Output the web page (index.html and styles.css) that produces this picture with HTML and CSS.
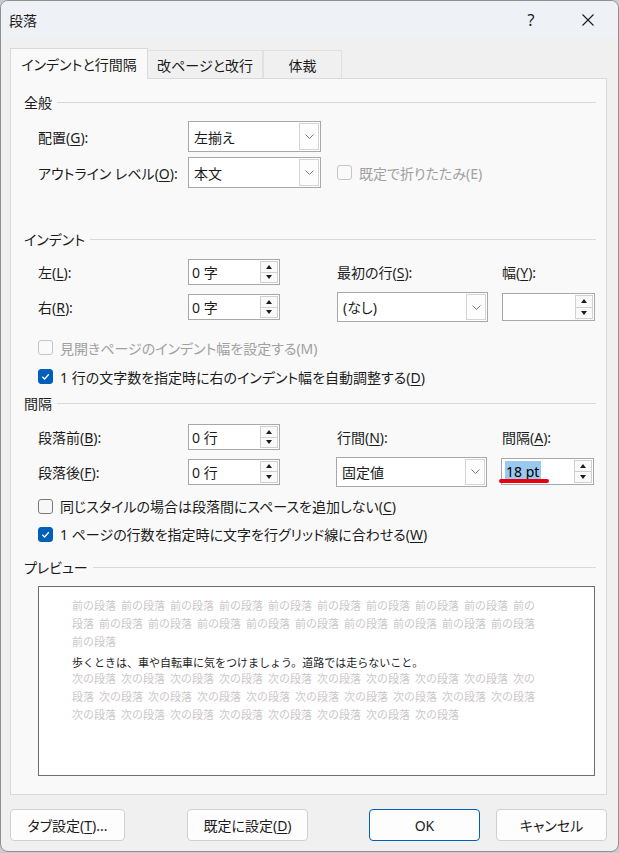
FILE: index.html
```html
<!DOCTYPE html>
<html lang="ja">
<head>
<meta charset="utf-8">
<title>段落</title>
<link rel="stylesheet" href="styles.css">
</head>
<body>
<div class="window">
  <div class="titlebar">
    <span class="title">段落</span>
    <span class="help">?</span>
    <span class="close"><svg width="12" height="12" viewBox="0 0 12 12"><path d="M0.5 0.5 L11.5 11.5 M11.5 0.5 L0.5 11.5" stroke="#1b1b1b" stroke-width="1.1" fill="none"/></svg></span>
  </div>
  <div class="body">
    <div class="tabs">
      <div class="tab active t1">インデントと行間隔</div>
      <div class="tab t2">改ページと改行</div>
      <div class="tab t3">体裁</div>
    </div>
    <div class="panel">
      <div class="gh g-general"><span>全般</span></div>
      <div class="frow r-h31 r-align">
        <span class="lbl">配置(<u>G</u>):</span>
        <div class="combo w133"><span class="val">左揃え</span><span class="dd"><svg width="9" height="5" viewBox="0 0 9 5"><path d="M0.5 0.5 L4.5 4.5 L8.5 0.5" stroke="#7a7a7a" fill="none" stroke-width="1"/></svg></span></div>
      </div>
      <div class="frow r-h31 r-outline">
        <span class="lbl">アウトライン レベル(<u>O</u>):</span>
        <div class="combo w133"><span class="val">本文</span><span class="dd"><svg width="9" height="5" viewBox="0 0 9 5"><path d="M0.5 0.5 L4.5 4.5 L8.5 0.5" stroke="#7a7a7a" fill="none" stroke-width="1"/></svg></span></div>
        <div class="chk in-grid disabled span2"><span class="box"></span><span>既定で折りたたみ(E)</span></div>
      </div>

      <div class="gh g-indent"><span>インデント</span></div>
      <div class="frow r-h30 r-left">
        <span class="lbl">左(<u>L</u>):</span>
        <div class="spin w92"><span class="val">0 字</span><span class="arrows"><span class="arr up"></span><span class="arr down"></span></span></div>
        <span class="lbl">最初の行(<u>S</u>):</span>
        <span class="lbl">幅(<u>Y</u>):</span>
      </div>
      <div class="frow r-h30 r-right">
        <span class="lbl">右(<u>R</u>):</span>
        <div class="spin w92"><span class="val">0 字</span><span class="arrows"><span class="arr up"></span><span class="arr down"></span></span></div>
        <div class="combo w151 h30"><span class="val">(なし)</span><span class="dd"><svg width="9" height="5" viewBox="0 0 9 5"><path d="M0.5 0.5 L4.5 4.5 L8.5 0.5" stroke="#7a7a7a" fill="none" stroke-width="1"/></svg></span></div>
        <div class="spin w93 h28"><span class="val"></span><span class="arrows"><span class="arr up"></span><span class="arr down"></span></span></div>
      </div>
      <div class="chk c-mihiraki disabled"><span class="box"></span><span>見開きページのインデント幅を設定する(M)</span></div>
      <div class="chk c-auto"><span class="box on"><svg width="13" height="13" viewBox="0 0 13 13"><path d="M3.3 6.8 L5.6 9 L9.8 4.2" stroke="#fff" stroke-width="1.3" fill="none"/></svg></span><span>1 行の文字数を指定時に右のインデント幅を自動調整する(<u>D</u>)</span></div>

      <div class="gh g-spacing"><span>間隔</span></div>
      <div class="frow r-h30 r-before">
        <span class="lbl">段落前(<u>B</u>):</span>
        <div class="spin w92"><span class="val">0 行</span><span class="arrows"><span class="arr up"></span><span class="arr down"></span></span></div>
        <span class="lbl">行間(<u>N</u>):</span>
        <span class="lbl">間隔(<u>A</u>):</span>
      </div>
      <div class="frow r-h31 r-after">
        <span class="lbl">段落後(<u>F</u>):</span>
        <div class="spin w92"><span class="val">0 行</span><span class="arrows"><span class="arr up"></span><span class="arr down"></span></span></div>
        <div class="combo w151 h30 shift-l"><span class="val">固定値</span><span class="dd"><svg width="9" height="5" viewBox="0 0 9 5"><path d="M0.5 0.5 L4.5 4.5 L8.5 0.5" stroke="#7a7a7a" fill="none" stroke-width="1"/></svg></span></div>
        <div class="spin w93 h27 shift-l"><span class="val"><span class="sel">18 pt</span></span><span class="arrows"><span class="arr up"></span><span class="arr down"></span></span><span class="redline"></span></div>
      </div>
      <div class="chk c-same"><span class="box"></span><span>同じスタイルの場合は段落間にスペースを追加しない(<u>C</u>)</span></div>
      <div class="chk c-grid"><span class="box on"><svg width="13" height="13" viewBox="0 0 13 13"><path d="M3.3 6.8 L5.6 9 L9.8 4.2" stroke="#fff" stroke-width="1.3" fill="none"/></svg></span><span>1 ページの行数を指定時に文字を行グリッド線に合わせる(<u>W</u>)</span></div>

      <div class="gh g-preview"><span>プレビュー</span></div>
      <div class="preview">
        <div class="pv-line ghost"><span>前の段落</span><span>前の段落</span><span>前の段落</span><span>前の段落</span><span>前の段落</span><span>前の段落</span><span>前の段落</span><span>前の段落</span><span>前の段落</span><span>前の</span></div>
        <div class="pv-line ghost"><span>段落</span><span>前の段落</span><span>前の段落</span><span>前の段落</span><span>前の段落</span><span>前の段落</span><span>前の段落</span><span>前の段落</span><span>前の段落</span><span>前の段落</span></div>
        <div class="pv-line ghost"><span>前の段落</span></div>
        <div class="pv-line main">歩くときは、車や自転車に気をつけましょう。道路では走らないこと。</div>
        <div class="pv-line ghost next"><span>次の段落</span><span>次の段落</span><span>次の段落</span><span>次の段落</span><span>次の段落</span><span>次の段落</span><span>次の段落</span><span>次の段落</span><span>次の段落</span><span>次の</span></div>
        <div class="pv-line ghost"><span>段落</span><span>次の段落</span><span>次の段落</span><span>次の段落</span><span>次の段落</span><span>次の段落</span><span>次の段落</span><span>次の段落</span><span>次の段落</span><span>次の段落</span></div>
        <div class="pv-line ghost"><span>次の段落</span><span>次の段落</span><span>次の段落</span><span>次の段落</span><span>次の段落</span><span>次の段落</span><span>次の段落</span><span>次の段落</span></div>
      </div>
    </div>
    <div class="buttons">
      <div class="btn b-tab">タブ設定(<u>T</u>)...</div>
      <div class="btn b-default">既定に設定(<u>D</u>)</div>
      <div class="btn b-ok">OK</div>
      <div class="btn b-cancel">キャンセル</div>
    </div>
  </div>
</div>
</body>
</html>
```
FILE: styles.css
```css
* { box-sizing: border-box; }
html, body { margin: 0; padding: 0; }
body {
  width: 619px;
  height: 853px;
  background: #c8ccd1;
  font-family: "Noto Sans", "Noto Sans CJK JP", sans-serif;
  font-size: 14px;
  color: #1b1b1b;
  font-feature-settings: "palt" 1;
  overflow: hidden;
}
u { text-decoration: underline; text-underline-offset: 2px; text-decoration-thickness: 1px; }

.window {
  width: 619px;
  height: 852px;
  border: 1px solid #8f8f8f;
  border-radius: 8px;
  background: #f0f0f0;
  overflow: hidden;
  display: flex;
  flex-direction: column;
}

/* title bar */
.titlebar {
  flex: none;
  height: 37px;
  background: #eef1f5;
  display: flex;
  align-items: center;
  padding-left: 8px;
}
.title { flex: 1; font-size: 14px; }
.help { width: 30px; text-align: center; margin-right: 27px; font-size: 16px; font-family: "Noto Sans", sans-serif; }
.close { width: 30px; margin-right: 15px; display: flex; justify-content: center; }

/* body */
.body {
  flex: 1;
  padding: 10px 11px 0 9px;
  display: flex;
  flex-direction: column;
}

.tabs {
  display: flex;
  align-items: flex-end;
  height: 30px;
}
.tab {
  height: 28px;
  border: 1px solid #e0e0e0;
  border-bottom: none;
  background: #f0f0f0;
  display: flex;
  align-items: center;
  justify-content: center;
}
.tab.active {
  height: 31px;
  margin-bottom: -1px;
  background: #f9f9f9;
  border-color: #d9d9d9;
  position: relative;
  z-index: 2;
}
.t1 { width: 138px; }
.t2 { width: 115px; border-left: none; }
.t3 { width: 79px; border-left: 1px solid #e0e0e0; }

.panel {
  border: 1px solid #d9d9d9;
  background: #f9f9f9;
  padding: 0 10px 18px 13px;
}

/* group headers */
.gh {
  display: flex;
  align-items: center;
  height: 20px;
  gap: 5px;
}
.gh::after {
  content: "";
  flex: 1;
  height: 1px;
  background: #d9d9d9;
}
.g-general { margin-top: 13px; }
.g-indent { margin-top: 41px; }
.g-spacing { margin-top: 2px; }
.g-preview { margin-top: 9px; }

/* form rows */
.frow {
  display: grid;
  grid-template-columns: 150px 149px 165px 1fr;
  align-items: center;
  padding-left: 14px;
}
.r-h30 { height: 30px; }
.r-h31 { height: 31px; }
.r-align { margin-top: 9px; }
.r-outline { margin-top: 5px; }
.r-left { margin-top: 8px; }
.r-right { margin-top: 5px; }
.r-before { margin-top: 9px; }
.r-after { margin-top: 4px; }
.span2 { grid-column: span 2; }

/* combo box */
.combo {
  display: flex;
  height: 31px;
  border: 1px solid #a8a8a8;
  background: #fff;
  padding: 1px;
}
.combo.h30 { height: 30px; }
.combo .val { flex: 1; padding-left: 4px; display: flex; align-items: center; }
.combo .dd {
  width: 20px;
  border: 1px solid #d4d4d4;
  background: #fdfdfd;
  display: flex;
  align-items: center;
  justify-content: center;
}
.w133 { width: 133px; }
.w151 { width: 151px; }
.shift-l { margin-left: -1px; }

/* spin box */
.spin {
  position: relative;
  display: flex;
  height: 26px;
  border: 1px solid #a8a8a8;
  background: #fff;
  padding: 1px 1px 1px 3px;
}
.spin.h28 { height: 28px; }
.spin.h27 { height: 27px; }
.w92 { width: 92px; }
.w93 { width: 93px; }
.spin .val { flex: 1; display: flex; align-items: center; }
.spin .arrows { width: 18px; display: flex; flex-direction: column; }
.arr {
  flex: 1;
  border: 1px solid #d0d0d0;
  background: #f9f9f9;
  display: flex;
  align-items: center;
  justify-content: center;
}
.arr.down { border-top: none; }
.arr.up::before {
  content: "";
  border-left: 3.5px solid transparent;
  border-right: 3.5px solid transparent;
  border-bottom: 4px solid #1b1b1b;
}
.arr.down::before {
  content: "";
  border-left: 3.5px solid transparent;
  border-right: 3.5px solid transparent;
  border-top: 4px solid #1b1b1b;
}
.sel {
  display: inline-block;
  background: #99c9ef;
  height: 21px;
  line-height: 21px;
  padding: 0 2px 0 1px;
  color: #000;
}
.redline {
  position: absolute;
  left: -3px;
  top: 20px;
  width: 50px;
  height: 4px;
  border-radius: 2px;
  background: #e60012;
}

/* checkboxes */
.chk {
  display: flex;
  align-items: center;
  gap: 7px;
  padding-left: 14px;
}
.chk.in-grid { padding-left: 0; }
.chk .box {
  width: 15px;
  height: 15px;
  border: 1px solid #7a7a7a;
  border-radius: 3px;
  background: #f7f7f7;
  display: flex;
  align-items: center;
  justify-content: center;
  flex: none;
}
.chk .box.on { background: #005fb8; border-color: #005fb8; }
.chk.disabled { color: #a0a0a0; }
.chk.disabled .box { border-color: #c6c6c6; background: #fafafa; }
.c-mihiraki { height: 29px; margin-top: 11px; }
.c-auto { height: 29px; }
.c-same { height: 28px; margin-top: 5px; }
.c-grid { height: 28px; }

/* preview */
.preview {
  margin: 9px 0 0 14px;
  width: 557px;
  height: 190px;
  border: 1px solid #6e6e6e;
  background: #fff;
  padding: 9px 0 0 33px;
  font-family: "Noto Sans CJK JP", sans-serif;
  font-feature-settings: normal;
  font-size: 11px;
}
.pv-line { height: 18px; line-height: 18px; white-space: nowrap; display: flex; }
.pv-line span { margin-right: 5px; }
.ghost { color: #ccc7c8; }
.main { color: #1e1e1e; margin-top: 3px; }
.next { margin-top: -2px; }

/* buttons */
.buttons {
  display: flex;
  margin-top: 14px;
}
.btn {
  height: 32px;
  border: 1px solid #d0d0d0;
  border-radius: 4px;
  background: #fdfdfd;
  display: flex;
  align-items: center;
  justify-content: center;
}
.b-tab { width: 115px; }
.b-default { width: 121px; margin-left: 62px; }
.b-ok { width: 111px; margin-left: 61px; border-color: #005fb8; }
.b-cancel { width: 111px; margin-left: 16px; }
```
